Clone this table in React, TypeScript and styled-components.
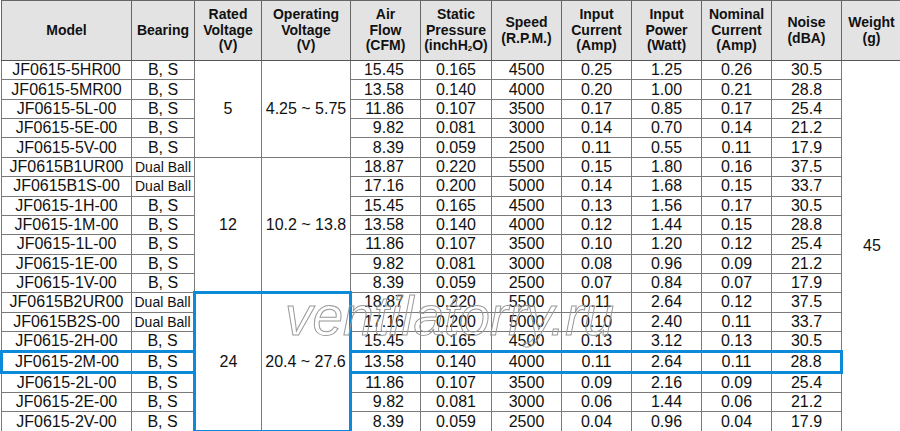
import React from 'react';
import styled, { createGlobalStyle } from 'styled-components';

const GlobalStyle = createGlobalStyle`
  html, body {
    margin: 0;
    padding: 0;
    background: #ffffff;
  }
  body {
    font-family: 'Liberation Sans', Arial, sans-serif;
    color: #111;
  }
`;

const BLUE = '#0a8ad8';
const LINE = '#7a7a7a';

const Wrapper = styled.div`
  position: relative;
  width: 900px;
  height: 431px;
  overflow: hidden;
`;

const Table = styled.table`
  width: 900px;
  table-layout: fixed;
  border-collapse: collapse;
  border: 1px solid #555;
`;

const HeadRow = styled.tr`
  height: 60px;
  background: #e3e3e3;
`;

const HeadCell = styled.th`
  padding: 0;
  border: 1px solid #666;
  border-bottom: 1px solid #555;
  font-size: 14px;
  line-height: 15.7px;
  font-weight: bold;
  text-align: center;
  vertical-align: middle;
  color: #111;

  sub {
    font-size: 8px;
    vertical-align: -1px;
    line-height: 0;
  }
`;

const BodyRow = styled.tr`
  height: 19.36px;
`;

type CellProps = {
  $align?: 'center' | 'right';
  $small?: boolean;
  $top?: boolean;
  $bottom?: boolean;
  $left?: boolean;
  $right?: boolean;
};

const Cell = styled.td<CellProps>`
  padding: 0 ${({ $align }) => ($align === 'right' ? '16px' : '0')} 0 0;
  border: 1px solid ${LINE};
  font-size: ${({ $small }) => ($small ? '14px' : '16px')};
  line-height: 18px;
  text-align: ${({ $align }) => $align || 'center'};
  vertical-align: middle;
  white-space: nowrap;
  ${({ $top }) => ($top ? `border-top: 3px solid ${BLUE};` : '')}
  ${({ $bottom }) => ($bottom ? `border-bottom: 3px solid ${BLUE};` : '')}
  ${({ $left }) => ($left ? `border-left: 3px solid ${BLUE};` : '')}
  ${({ $right }) => ($right ? `border-right: 3px solid ${BLUE};` : '')}
`;

const Watermark = styled.div`
  position: absolute;
  left: 285px;
  top: 284px;
  font-family: 'Liberation Sans', Arial, sans-serif;
  font-style: italic;
  font-size: 55px;
  letter-spacing: 0;
  color: transparent;
  -webkit-text-stroke: 1px #999;
  pointer-events: none;
  white-space: nowrap;
`;

type Row = [string, string, string, string, string, string, string, string, string];

type Group = {
  rated: string;
  range: string;
  boxed?: boolean;
  rows: Row[];
};

const groups: Group[] = [
  {
    rated: '5',
    range: '4.25 ~ 5.75',
    rows: [
      ['JF0615-5HR00', 'B, S', '15.45', '0.165', '4500', '0.25', '1.25', '0.26', '30.5'],
      ['JF0615-5MR00', 'B, S', '13.58', '0.140', '4000', '0.20', '1.00', '0.21', '28.8'],
      ['JF0615-5L-00', 'B, S', '11.86', '0.107', '3500', '0.17', '0.85', '0.17', '25.4'],
      ['JF0615-5E-00', 'B, S', '9.82', '0.081', '3000', '0.14', '0.70', '0.14', '21.2'],
      ['JF0615-5V-00', 'B, S', '8.39', '0.059', '2500', '0.11', '0.55', '0.11', '17.9'],
    ],
  },
  {
    rated: '12',
    range: '10.2 ~ 13.8',
    rows: [
      ['JF0615B1UR00', 'Dual Ball', '18.87', '0.220', '5500', '0.15', '1.80', '0.16', '37.5'],
      ['JF0615B1S-00', 'Dual Ball', '17.16', '0.200', '5000', '0.14', '1.68', '0.15', '33.7'],
      ['JF0615-1H-00', 'B, S', '15.45', '0.165', '4500', '0.13', '1.56', '0.17', '30.5'],
      ['JF0615-1M-00', 'B, S', '13.58', '0.140', '4000', '0.12', '1.44', '0.15', '28.8'],
      ['JF0615-1L-00', 'B, S', '11.86', '0.107', '3500', '0.10', '1.20', '0.12', '25.4'],
      ['JF0615-1E-00', 'B, S', '9.82', '0.081', '3000', '0.08', '0.96', '0.09', '21.2'],
      ['JF0615-1V-00', 'B, S', '8.39', '0.059', '2500', '0.07', '0.84', '0.07', '17.9'],
    ],
  },
  {
    rated: '24',
    range: '20.4 ~ 27.6',
    boxed: true,
    rows: [
      ['JF0615B2UR00', 'Dual Ball', '18.87', '0.220', '5500', '0.11', '2.64', '0.12', '37.5'],
      ['JF0615B2S-00', 'Dual Ball', '17.16', '0.200', '5000', '0.10', '2.40', '0.11', '33.7'],
      ['JF0615-2H-00', 'B, S', '15.45', '0.165', '4500', '0.13', '3.12', '0.13', '30.5'],
      ['JF0615-2M-00', 'B, S', '13.58', '0.140', '4000', '0.11', '2.64', '0.11', '28.8'],
      ['JF0615-2L-00', 'B, S', '11.86', '0.107', '3500', '0.09', '2.16', '0.09', '25.4'],
      ['JF0615-2E-00', 'B, S', '9.82', '0.081', '3000', '0.06', '1.44', '0.06', '21.2'],
      ['JF0615-2V-00', 'B, S', '8.39', '0.059', '2500', '0.04', '0.96', '0.04', '17.9'],
    ],
  },
];

const selectedModel = 'JF0615-2M-00';
const totalRows = groups.reduce((n, g) => n + g.rows.length, 0);

const colWidths = [130, 63, 67, 89, 70, 71, 70, 70, 70, 70, 70, 60];

const App: React.FC = () => {
  return (
    <Wrapper>
      <GlobalStyle />
      <Table>
        <colgroup>
          {colWidths.map((w, i) => (
            <col key={i} style={{ width: w }} />
          ))}
        </colgroup>
        <thead>
          <HeadRow>
            <HeadCell>Model</HeadCell>
            <HeadCell>Bearing</HeadCell>
            <HeadCell>Rated<br />Voltage<br />(V)</HeadCell>
            <HeadCell>Operating<br />Voltage<br />(V)</HeadCell>
            <HeadCell>Air<br />Flow<br />(CFM)</HeadCell>
            <HeadCell>Static<br />Pressure<br />(inchH<sub>2</sub>O)</HeadCell>
            <HeadCell>Speed<br />(R.P.M.)</HeadCell>
            <HeadCell>Input<br />Current<br />(Amp)</HeadCell>
            <HeadCell>Input<br />Power<br />(Watt)</HeadCell>
            <HeadCell>Nominal<br />Current<br />(Amp)</HeadCell>
            <HeadCell>Noise<br />(dBA)</HeadCell>
            <HeadCell>Weight<br />(g)</HeadCell>
          </HeadRow>
        </thead>
        <tbody>
          {groups.map((g, gi) =>
            g.rows.map((r, ri) => {
              const [model, bearing, air, pressure, speed, current, power, nominal, noise] = r;
              const sel = model === selectedModel;
              const small = bearing === 'Dual Ball';
              return (
                <BodyRow key={model}>
                  <Cell $top={sel} $bottom={sel} $left={sel}>{model}</Cell>
                  <Cell $top={sel} $bottom={sel} $small={small}>{bearing}</Cell>
                  {ri === 0 && (
                    <>
                      <Cell rowSpan={g.rows.length} $left={g.boxed} $top={g.boxed} $bottom={g.boxed}>
                        {g.rated}
                      </Cell>
                      <Cell rowSpan={g.rows.length} $right={g.boxed} $top={g.boxed} $bottom={g.boxed}>
                        {g.range}
                      </Cell>
                    </>
                  )}
                  <Cell $align="right" $top={sel} $bottom={sel}>{air}</Cell>
                  <Cell $top={sel} $bottom={sel}>{pressure}</Cell>
                  <Cell $top={sel} $bottom={sel}>{speed}</Cell>
                  <Cell $top={sel} $bottom={sel}>{current}</Cell>
                  <Cell $top={sel} $bottom={sel}>{power}</Cell>
                  <Cell $top={sel} $bottom={sel}>{nominal}</Cell>
                  <Cell $top={sel} $bottom={sel} $right={sel}>{noise}</Cell>
                  {gi === 0 && ri === 0 && <Cell rowSpan={totalRows}>45</Cell>}
                </BodyRow>
              );
            })
          )}
        </tbody>
      </Table>
      <Watermark>ventilatorry.ru</Watermark>
    </Wrapper>
  );
};

export default App;
